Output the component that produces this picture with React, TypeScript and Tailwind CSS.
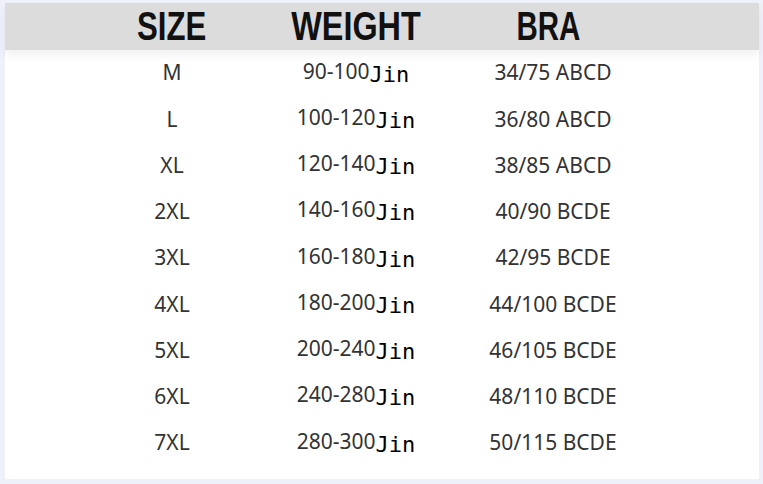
const rows = [
    { size: "M", weight: "90-100", bra: "34/75 ABCD" },
    { size: "L", weight: "100-120", bra: "36/80 ABCD" },
    { size: "XL", weight: "120-140", bra: "38/85 ABCD" },
    { size: "2XL", weight: "140-160", bra: "40/90 BCDE" },
    { size: "3XL", weight: "160-180", bra: "42/95 BCDE" },
    { size: "4XL", weight: "180-200", bra: "44/100 BCDE" },
    { size: "5XL", weight: "200-240", bra: "46/105 BCDE" },
    { size: "6XL", weight: "240-280", bra: "48/110 BCDE" },
    { size: "7XL", weight: "280-300", bra: "50/115 BCDE" },
];

const cols = "grid grid-cols-[190px_178px_216px] pl-[72px]";

export default function App() {
    return (
        <div className="w-[763px] h-[484px] bg-[#eef0fa] pt-[3px] pl-[5px] pr-[4px] pb-[5px]">
            <div className="h-full bg-white flex flex-col">
                <div className={`${cols} h-[47px] bg-[#dcdcdc] items-end shadow-[0_5px_8px_rgba(0,0,0,0.06)] font-['Liberation_Sans',sans-serif] font-bold text-[41px] leading-none text-[#111]`}>
                    <div className="text-center pb-[3px]"><span className="inline-block scale-x-[0.76]">SIZE</span></div>
                    <div className="text-center pb-[3px]"><span className="inline-block scale-x-[0.79]">WEIGHT</span></div>
                    <div className="text-center pb-[3px] pr-[10px]"><span className="inline-block scale-x-[0.72]">BRA</span></div>
                </div>
                <div className="flex flex-col font-['Noto_Sans',sans-serif] text-[21px] text-[#333]">
                    {rows.map((r) => (
                        <div key={r.size} className={`${cols} h-[46.25px] items-center`}>
                            <div className="text-center">{r.size}</div>
                            <div className="text-center whitespace-nowrap">
                                {r.weight}
                                <span className="font-['DejaVu_Sans_Mono',monospace] text-[22px] text-black align-[-3px]">Jin</span>
                            </div>
                            <div className="text-center">{r.bra}</div>
                        </div>
                    ))}
                </div>
            </div>
        </div>
    );
}
